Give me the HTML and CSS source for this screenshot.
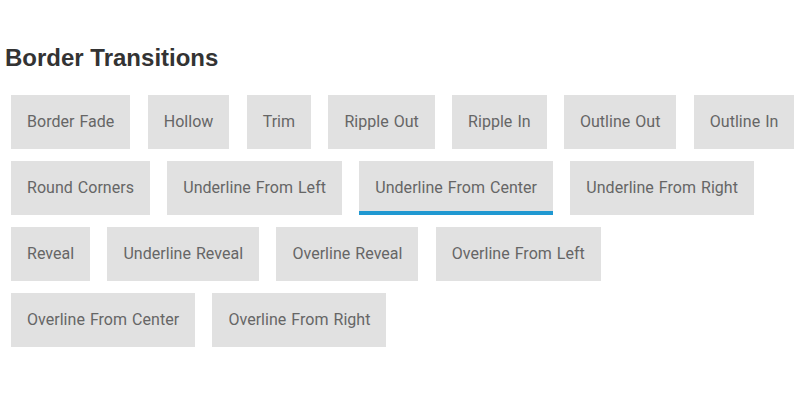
FILE: index.html
```html
<!DOCTYPE html>
<html>
<head>
<meta charset="utf-8">
<link rel="stylesheet" href="styles.css">
</head>
<body>
<h2 class="title">Border Transitions</h2>
<div class="buttons">
  <a class="button">Border Fade</a>
  <a class="button">Hollow</a>
  <a class="button">Trim</a>
  <a class="button">Ripple Out</a>
  <a class="button">Ripple In</a>
  <a class="button">Outline Out</a>
  <a class="button">Outline In</a>
  <a class="button">Round Corners</a>
  <a class="button">Underline From Left</a>
  <a class="button active">Underline From Center</a>
  <a class="button">Underline From Right</a>
  <a class="button">Reveal</a>
  <a class="button">Underline Reveal</a>
  <a class="button">Overline Reveal</a>
  <a class="button">Overline From Left</a>
  <a class="button">Overline From Center</a>
  <a class="button">Overline From Right</a>
</div>
</body>
</html>
```

FILE: styles.css
```css
html, body {
  margin: 0;
  background: #fff;
}
body {
  padding: 44px 0 0 5px;
}
.title {
  margin: 0;
  font-family: "Liberation Sans", Arial, sans-serif;
  font-size: 24px;
  font-weight: bold;
  line-height: 28px;
  color: #333;
}
.buttons {
  display: flex;
  flex-wrap: wrap;
  column-gap: 17.3px;
  row-gap: 12.5px;
  margin-top: 23px;
  padding-left: 6px;
}
.button {
  position: relative;
  display: block;
  padding: 16px;
  background: #e1e1e1;
  color: #666;
  font-family: Roboto, sans-serif;
  font-size: 16px;
  line-height: 21.5px;
  word-spacing: 1px;
  letter-spacing: 0.03px;
  text-decoration: none;
}
.button.active::before {
  content: "";
  position: absolute;
  left: 0;
  right: 0;
  bottom: 0;
  height: 4px;
  background: #2098d1;
}
```
